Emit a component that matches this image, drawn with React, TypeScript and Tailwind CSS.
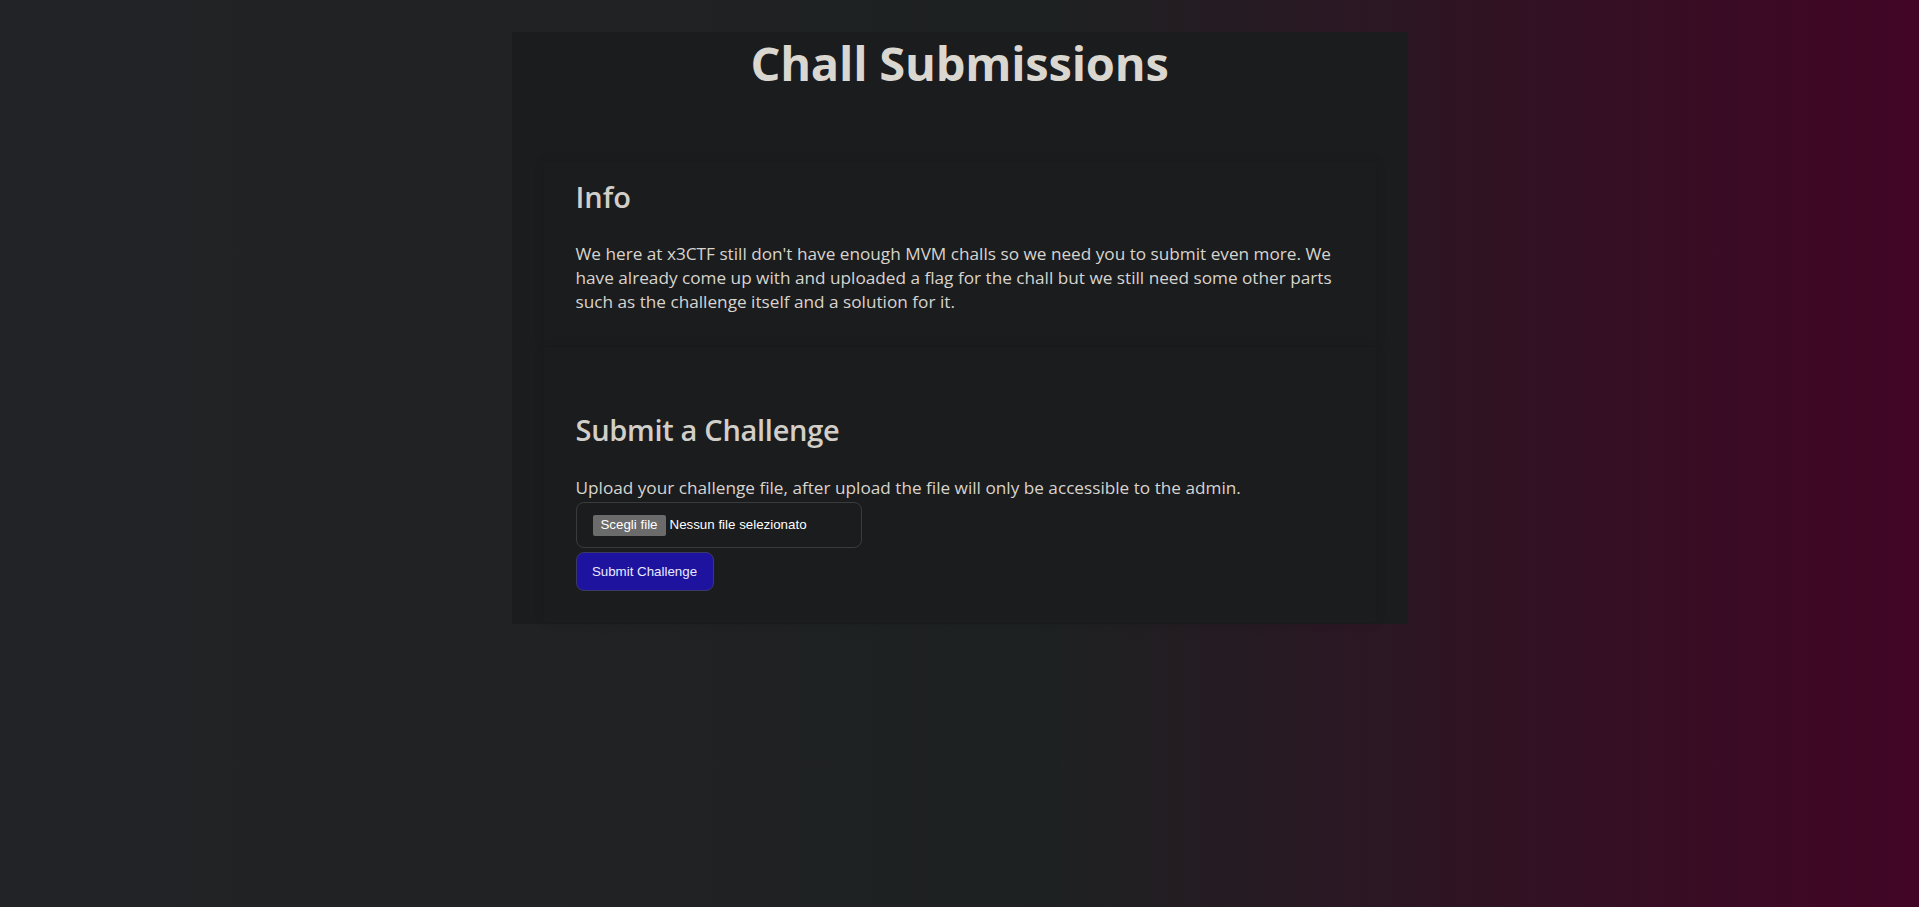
import React from "react";

function Section({ className, children }: { className?: string; children: React.ReactNode }) {
  return (
    <section
      className={
        "px-8 bg-[#1b1c1e] shadow-[0_0_10px_rgba(0,0,0,0.12)] " + (className || "")
      }
    >
      {children}
    </section>
  );
}

export default function App() {
  return (
    <div className="min-h-screen w-full bg-[linear-gradient(to_right,#222326_0%,#1e2122_55%,#420525_100%)] font-['Open_Sans',sans-serif] pt-8">
      <main className="mx-auto w-[896px] bg-[#1b1c1e] px-8 pt-[7px] pb-px">
        <h1 className="text-center text-[47px] leading-[48px] font-bold tracking-[-0.2px] text-[#dad6d0]">
          Chall Submissions
        </h1>

        {/* Info block */}
        <Section className="mt-[75px] pt-[15px] pb-8">
          <h2 className="text-[29px] leading-[40px] font-semibold text-[#d2cec8]">Info</h2>
          <p className="mt-[25px] text-[17.2px] leading-[24px] text-[#d8d4ce]">
            We here at x3CTF still don't have enough MVM challs so we need you to submit even more. We
            have already come up with and uploaded a flag for the chall but we still need some other parts
            such as the challenge itself and a solution for it.
          </p>
        </Section>

        {/* Upload form */}
        <Section className="mt-px pt-[63px] pb-8">
          <h2 className="text-[29px] leading-[40px] font-semibold tracking-[-0.3px] text-[#d2cec8]">
            Submit a Challenge
          </h2>
          <p className="mt-[26px] text-[17.2px] leading-[24px] text-[#d8d4ce]">
            Upload your challenge file, after upload the file will only be accessible to the admin.
          </p>
          <form className="mt-[2px] flex flex-col items-start gap-1" onSubmit={(e) => e.preventDefault()}>
            <label className="flex h-[46px] w-[286px] cursor-pointer items-center rounded-lg border border-[#3a3b3d] pl-4 font-['Liberation_Sans',Arial,sans-serif] text-[13.33px] text-white">
              <input type="file" className="hidden" />
              <span className="flex h-[21px] w-[73px] items-center justify-center rounded-[2px] bg-[#6b6b6b]">
                Scegli file
              </span>
              <span className="ml-1">Nessun file selezionato</span>
            </label>
            <button
              type="submit"
              className="h-[39px] w-[138px] rounded-lg border border-[#3b3a66] bg-[#1d139f] font-['Liberation_Sans',Arial,sans-serif] text-[13.33px] text-[#ebeaff]"
            >
              Submit Challenge
            </button>
          </form>
        </Section>
      </main>
    </div>
  );
}
